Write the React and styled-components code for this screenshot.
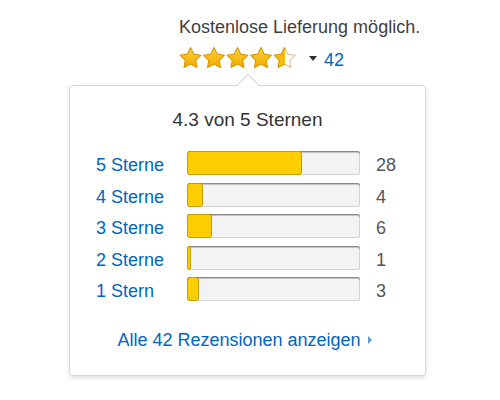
import styled, { createGlobalStyle } from "styled-components";

const GlobalStyle = createGlobalStyle`
  body {
    margin: 0;
    background: #fff;
    font-family: "Liberation Sans", Arial, sans-serif;
  }
`;

const Page = styled.div`
  width: 500px;
  height: 400px;
  padding-top: 17px;
  box-sizing: border-box;
`;

const Header = styled.div`
  margin-left: 179px;
`;

const Delivery = styled.div`
  font-size: 18px;
  line-height: 20px;
  color: #3f3f3f;
`;

const RatingRow = styled.div`
  display: flex;
  align-items: flex-end;
  margin-top: 9px;
  height: 24px;
`;

const Caret = styled.span`
  align-self: center;
  width: 0;
  height: 0;
  margin: 0 7px 0 10px;
  border-left: 4px solid transparent;
  border-right: 4px solid transparent;
  border-top: 5px solid #333;
`;

const Link = styled.a`
  color: #0066c0;
  text-decoration: none;
  font-size: 18px;
  line-height: 20px;
  cursor: pointer;
`;

const Card = styled.div`
  position: relative;
  margin: 15px 0 0 69px;
  width: 357px;
  box-sizing: border-box;
  padding: 23px 0 25px 26px;
  background: #fff;
  border: 1px solid #d8d8d8;
  border-radius: 4px;
  box-shadow: 0 2px 4px rgba(0, 0, 0, 0.13);

  &::before {
    content: "";
    position: absolute;
    top: -9px;
    left: 170px;
    width: 16px;
    height: 16px;
    background: #fff;
    border-top: 1px solid #d8d8d8;
    border-left: 1px solid #d8d8d8;
    box-sizing: border-box;
    transform: rotate(45deg);
  }
`;

const Title = styled.div`
  margin-left: -26px;
  text-align: center;
  font-size: 19px;
  line-height: 22px;
  color: #333;
`;

const Histogram = styled.div`
  display: flex;
  flex-direction: column;
  gap: 7.6px;
  margin-top: 20px;
`;

const Row = styled.div`
  display: flex;
  align-items: flex-end;
  height: 24px;
`;

const Label = styled(Link)`
  width: 91px;
  flex: none;
`;

const Track = styled.div`
  display: flex;
  width: 173px;
  height: 24px;
  flex: none;
  background: #f3f3f3;
  border-radius: 3px;
  box-shadow: inset 0 1px 0 #8a8a8a, inset 0 2px 0 #c4c4c4,
    inset 0 0 0 1px #d2d2d2;
`;

const Fill = styled.div`
  height: 100%;
  box-sizing: border-box;
  background: #ffce00;
  border: 1px solid #c39e00;
  border-radius: 3px;
`;

const Count = styled.span`
  margin-left: 16px;
  font-size: 18px;
  line-height: 20px;
  color: #555;
`;

const Footer = styled.div`
  display: flex;
  justify-content: center;
  align-items: center;
  margin: 29px 0 0 -26px;
  padding-right: 6px;
`;

const RightCaret = styled.span`
  width: 0;
  height: 0;
  margin-left: 7px;
  border-top: 4px solid transparent;
  border-bottom: 4px solid transparent;
  border-left: 4px solid #5e9ccf;
`;

const STAR =
  "12,1.6 15.23,8.15 22.46,9.2 17.23,14.3 18.47,21.5 12,18.1 5.53,21.5 6.77,14.3 1.54,9.2 8.77,8.15";

function Stars() {
  return (
    <svg width="120" height="24" viewBox="0 0 120 24">
      <defs>
        <linearGradient id="gold" x1="0" y1="0" x2="0" y2="1">
          <stop offset="0" stopColor="#ffd43a" />
          <stop offset="1" stopColor="#f2a900" />
        </linearGradient>
        <linearGradient id="halfFill" x1="0" y1="0" x2="1" y2="0">
          <stop offset="0.5" stopColor="#f8bb10" />
          <stop offset="0.5" stopColor="#fff" />
        </linearGradient>
        <linearGradient id="halfStroke" x1="0" y1="0" x2="1" y2="0">
          <stop offset="0.5" stopColor="#d99700" />
          <stop offset="0.5" stopColor="#d8c295" />
        </linearGradient>
      </defs>
      {[0, 1, 2, 3, 4].map((i) => (
        <polygon
          key={i}
          points={STAR}
          transform={`translate(${i * 23.5 - 0.5} 0)`}
          fill={i < 4 ? "url(#gold)" : "url(#halfFill)"}
          stroke={i < 4 ? "#d99700" : "url(#halfStroke)"}
          strokeWidth="1.1"
          strokeLinejoin="round"
        />
      ))}
    </svg>
  );
}

const ratings = [
  { label: "5 Sterne", count: 28 },
  { label: "4 Sterne", count: 4 },
  { label: "3 Sterne", count: 6 },
  { label: "2 Sterne", count: 1 },
  { label: "1 Stern", count: 3 },
];

const total = 42;

export default function App() {
  return (
    <Page>
      <GlobalStyle />
      <Header>
        <Delivery>Kostenlose Lieferung möglich.</Delivery>
        <RatingRow>
          <Stars />
          <Caret />
          <Link>42</Link>
        </RatingRow>
      </Header>
      <Card>
        <Title>4.3 von 5 Sternen</Title>
        <Histogram>
          {ratings.map((r) => (
            <Row key={r.label}>
              <Label>{r.label}</Label>
              <Track>
                <Fill style={{ width: `${(r.count / total) * 100}%` }} />
              </Track>
              <Count>{r.count}</Count>
            </Row>
          ))}
        </Histogram>
        <Footer>
          <Link>Alle 42 Rezensionen anzeigen</Link>
          <RightCaret />
        </Footer>
      </Card>
    </Page>
  );
}
